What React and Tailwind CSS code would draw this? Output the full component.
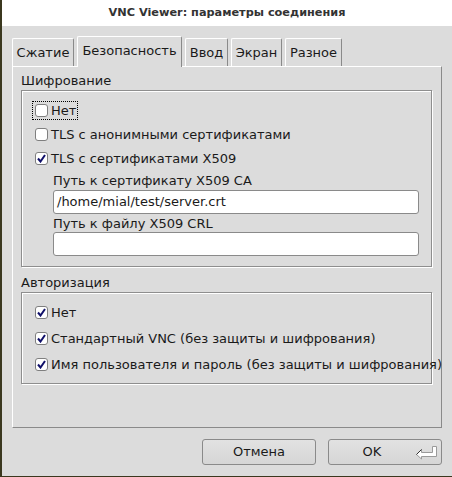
import React from "react";

const font = { fontFamily: '"DejaVu Sans", "Liberation Sans", sans-serif' };

function Box({ checked }) {
  return (
    <span className="w-[13px] h-[13px] shrink-0 rounded-[3px] border border-[#7f7f7f] bg-white flex items-center justify-center">
      {checked && (
        <svg width="9" height="9" viewBox="0 0 9 9">
          <path d="M1 4.5 L3.5 7.5 L8 1" fill="none" stroke="#10106a" strokeWidth="2" />
        </svg>
      )}
    </span>
  );
}

function Check({ checked, label, focus, h }) {
  return (
    <div className={`flex items-center ${h}`}>
      <span
        className={`flex items-center gap-[3px] pl-[2px] pr-[1px] py-[2px] ${
          focus ? "outline outline-1 outline-dotted outline-black" : ""
        }`}
      >
        <Box checked={checked} />
        <span className="leading-[13px]">{label}</span>
      </span>
    </div>
  );
}

function Tab({ label, active, w }) {
  return (
    <div
      className={`${w} flex items-center justify-center whitespace-nowrap border-t border-l border-white border-r border-r-[#8a8a8a] rounded-t-[2px] bg-[#dcdcdc] ${
        active ? "h-[31px] -mb-px relative z-10 pb-[3px]" : "h-[28px]"
      }`}
    >
      {label}
    </div>
  );
}

const etched =
  "border border-[#8e8e8e] shadow-[inset_1px_1px_0_#ffffff,1px_1px_0_#ffffff]";

export default function App() {
  return (
    <div className="w-[452px] h-[477px] bg-[#3b381f] pl-[2px] pr-[1px] pb-[1px] flex" style={font}>
      <div className="flex-1 flex flex-col bg-[#dcdcdc] text-[13px] text-[#1a1a1a]">
        <div className="h-[26px] bg-white flex items-center justify-center text-[11.3px] font-bold text-[#333]">
          VNC Viewer: параметры соединения
        </div>

        <div className="px-[10px] pt-[10px] flex flex-col">
          <div className="flex items-end gap-[3px] h-[30px]">
            <Tab label="Сжатие" w="w-[62px]" />
            <Tab label="Безопасность" w="w-[105px]" active />
            <Tab label="Ввод" w="w-[43px]" />
            <Tab label="Экран" w="w-[51px]" />
            <Tab label="Разное" w="w-[57px]" />
          </div>

          <div className="h-[362px] border-t border-l border-white border-r border-b border-r-[#8a8a8a] border-b-[#8a8a8a] pt-[5px] pl-[8px] pr-[9px]">
            <div className="h-[17px] leading-[17px]">Шифрование</div>
            <div className={`mt-[1px] ${etched} pt-[7px] pb-[10px] pl-[11px] pr-[12px]`}>
              <Check label="Нет" focus h="h-[24px]" />
              <Check label="TLS с анонимными сертификатами" h="h-[24px]" />
              <Check label="TLS с сертификатами X509" checked h="h-[24px]" />
              <div className="pl-[20px] mt-[2px]">
                <div className="h-[17px] leading-[17px]">Путь к сертификату X509 CA</div>
                <div className="mt-[1px] h-[24px] bg-white border border-[#8a8a8a] rounded-[3px] flex items-center px-[3px]">
                  /home/mial/test/server.crt
                </div>
                <div className="mt-[1px] h-[17px] leading-[17px]">Путь к файлу X509 CRL</div>
                <div className="h-[24px] bg-white border border-[#8a8a8a] rounded-[3px]"></div>
              </div>
            </div>

            <div className="mt-[7px] h-[17px] leading-[17px]">Авторизация</div>
            <div className={`mt-[1px] ${etched} pt-[6px] pb-[6px] pl-[11px]`}>
              <Check label="Нет" checked h="h-[26px]" />
              <Check label="Стандартный VNC (без защиты и шифрования)" checked h="h-[26px]" />
              <div className="mr-[-12px] whitespace-nowrap">
                <Check label="Имя пользователя и пароль (без защиты и шифрования)" checked h="h-[26px]" />
              </div>
            </div>
          </div>

          <div className="mt-[11px] flex justify-end gap-[12px]">
            <button className="w-[114px] h-[26px] border border-[#8a8a8a] rounded-[3px] bg-gradient-to-b from-[#e2e2e2] to-[#d6d6d6] flex items-center justify-center">
              Отмена
            </button>
            <button className="w-[114px] h-[26px] border border-[#8a8a8a] rounded-[3px] bg-gradient-to-b from-[#e2e2e2] to-[#d6d6d6] flex items-center pr-[3px]">
              <span className="flex-1 text-center">OK</span>
              <svg width="23" height="15" viewBox="0 0 23 15">
                <path
                  d="M1.5 9.5 L6.5 4.5 L6.5 7.5 L17.5 7.5 L17.5 1.5 L21.5 1.5 L21.5 11.5 L6.5 11.5 L6.5 14 Z"
                  fill="#ffffff"
                  stroke="#9a9a9a"
                  strokeWidth="1"
                />
                <path d="M1.5 9.5 L6.5 4.5" stroke="#333" strokeWidth="1" />
              </svg>
            </button>
          </div>
        </div>
      </div>
    </div>
  );
}
